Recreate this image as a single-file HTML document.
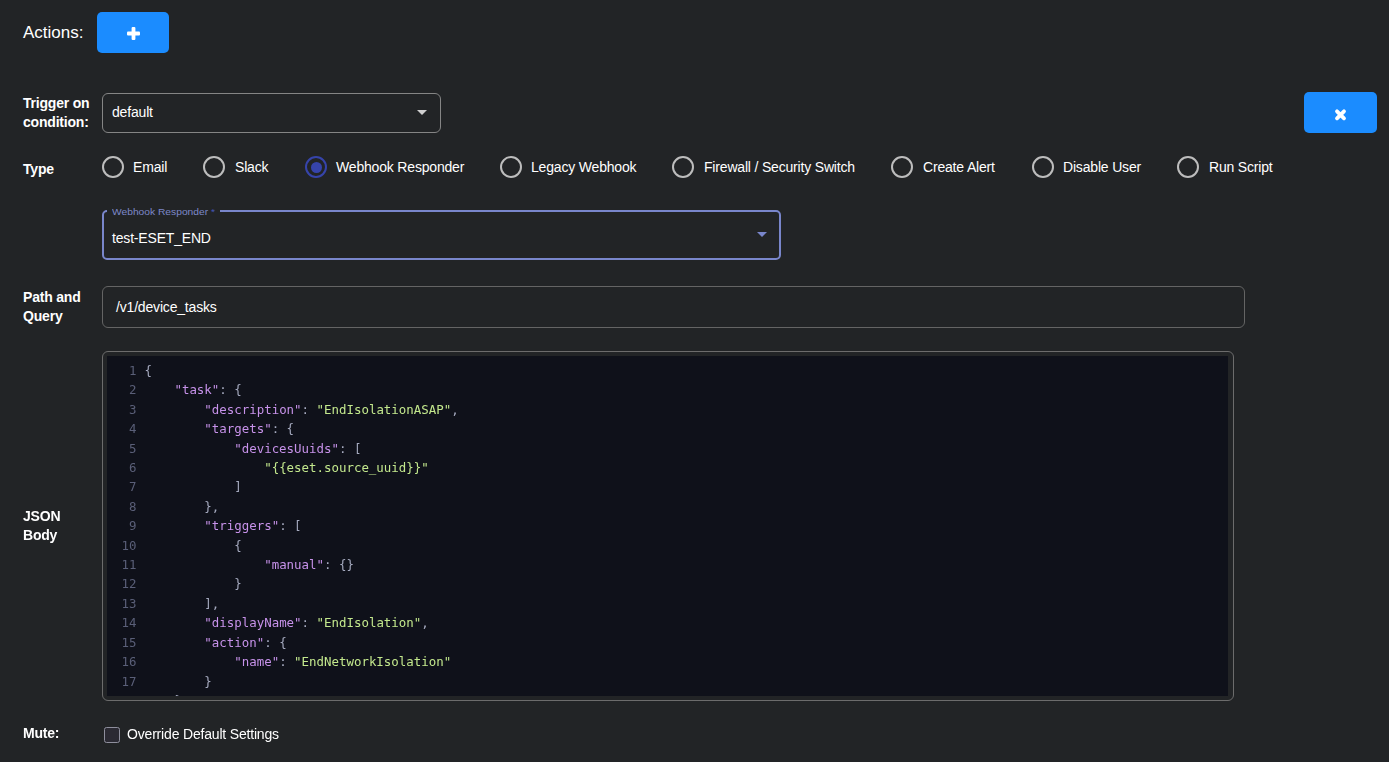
<!DOCTYPE html>
<html lang="en">
<head>
<meta charset="utf-8">
<title>Actions</title>
<style>
*{box-sizing:border-box;margin:0;padding:0}
html,body{width:1389px;height:762px;overflow:hidden;background:#222426;color:#fff;font-family:"Liberation Sans",Arial,sans-serif;font-size:14px}
.abs{position:absolute}
.lbl{position:absolute;left:23px;font-weight:bold;font-size:14px;letter-spacing:-0.2px;line-height:19px;color:#fff}
.btn{position:absolute;background:#1b8cff;border-radius:5px}
.btn svg{position:absolute}
.radio{position:absolute;top:156px;width:22px;height:22px;border:2px solid #bdbdbd;border-radius:50%}
.radio.on{border-color:#3644aa}
.radio.on::after{content:"";position:absolute;left:4px;top:4px;width:11px;height:11px;border-radius:50%;background:#3644aa}
.rl{position:absolute;top:158px;font-size:14px;letter-spacing:-0.18px;line-height:18px;color:#fff;white-space:nowrap}
.code{position:absolute;left:107px;top:356px;width:1121px;height:340px;background:#0f111a;overflow:hidden;font-family:"DejaVu Sans Mono","Liberation Mono",monospace;font-size:12.43px;line-height:19.42px;padding-top:5px}
.ln{display:block;white-space:pre;height:19.42px;color:#a6abc0;position:relative;padding-left:37.5px}
.ln i{position:absolute;left:0;width:29.5px;text-align:right;font-style:normal;color:#5a5f78}
.k{color:#c792ea}.s{color:#c3e88d}
</style>
</head>
<body>
<div class="abs" style="left:23px;top:22px;font-size:17px;line-height:22px;color:#fff">Actions:</div>
<div class="btn" style="left:97px;top:12px;width:72px;height:41px">
<svg style="left:29px;top:14px" width="15" height="15" viewBox="0 0 15 15"><rect x="5.600" y="1" width="3.800" height="13" rx="1" fill="#fff"/><rect x="1" y="5.600" width="13" height="3.800" rx="1" fill="#fff"/></svg>
</div>

<div class="lbl" style="top:94px">Trigger on<br>condition:</div>
<div class="abs" style="left:102px;top:93px;width:339px;height:40px;border:1px solid #858585;border-radius:6px"></div>
<div class="abs" style="left:112px;top:103px;font-size:14px;letter-spacing:-0.18px;line-height:18px">default</div>
<svg class="abs" style="left:417px;top:110px" width="10" height="5" viewBox="0 0 10 5"><path d="M0 0h10L5 5z" fill="#d0d0d0"/></svg>

<div class="btn" style="left:1304px;top:92px;width:73px;height:41px">
<svg style="left:29px;top:15px" width="15" height="15" viewBox="0 0 15 15"><path d="M4 4.300l7 7M11 4.300l-7 7" stroke="#fff" stroke-width="3.800" stroke-linecap="round" fill="none"/></svg>
</div>

<div class="lbl" style="top:160px">Type</div>
<div class="radio" style="left:102px"></div><div class="rl" style="left:133px">Email</div>
<div class="radio" style="left:203px"></div><div class="rl" style="left:235px">Slack</div>
<div class="radio on" style="left:305px"></div><div class="rl" style="left:336px">Webhook Responder</div>
<div class="radio" style="left:500px"></div><div class="rl" style="left:531px">Legacy Webhook</div>
<div class="radio" style="left:672px"></div><div class="rl" style="left:704px">Firewall / Security Switch</div>
<div class="radio" style="left:891px"></div><div class="rl" style="left:923px">Create Alert</div>
<div class="radio" style="left:1032px"></div><div class="rl" style="left:1063px">Disable User</div>
<div class="radio" style="left:1177px"></div><div class="rl" style="left:1209px">Run Script</div>

<div class="abs" style="left:102px;top:210px;width:679px;height:50px;border:2px solid #7986cb;border-radius:5px"></div>
<div class="abs" style="left:107px;top:205px;width:113px;height:12px;background:#222426"></div>
<div class="abs" style="left:112px;top:206px;font-size:9.1px;line-height:12px;color:#7d88c9;white-space:nowrap;transform-origin:0 0;transform:scaleX(1.127)">Webhook Responder <span style="color:#4456b8">*</span></div>
<div class="abs" style="left:112px;top:229px;font-size:14px;letter-spacing:-0.18px;line-height:18px">test-ESET_END</div>
<svg class="abs" style="left:757px;top:232px" width="10" height="5" viewBox="0 0 10 5"><path d="M0 0h10L5 5z" fill="#7986cb"/></svg>

<div class="lbl" style="top:288px">Path and<br>Query</div>
<div class="abs" style="left:102px;top:286px;width:1143px;height:42px;border:1px solid #646464;border-radius:6px"></div>
<div class="abs" style="left:116px;top:298px;font-size:14px;letter-spacing:-0.18px;line-height:18px">/v1/device_tasks</div>

<div class="lbl" style="top:507px;will-change:transform">JSON<br>Body</div>
<div class="abs" style="left:102px;top:351px;width:1132px;height:350px;border:1px solid #6c6c6c;border-radius:6px"></div>
<div class="code"><div style="will-change:transform">
<span class="ln"><i>1</i>{</span>
<span class="ln"><i>2</i>    <span class="k">"task"</span>: {</span>
<span class="ln"><i>3</i>        <span class="k">"description"</span>: <span class="s">"EndIsolationASAP"</span>,</span>
<span class="ln"><i>4</i>        <span class="k">"targets"</span>: {</span>
<span class="ln"><i>5</i>            <span class="k">"devicesUuids"</span>: [</span>
<span class="ln"><i>6</i>                <span class="s">"{{eset.source_uuid}}"</span></span>
<span class="ln"><i>7</i>            ]</span>
<span class="ln"><i>8</i>        },</span>
<span class="ln"><i>9</i>        <span class="k">"triggers"</span>: [</span>
<span class="ln"><i>10</i>            {</span>
<span class="ln"><i>11</i>                <span class="k">"manual"</span>: {}</span>
<span class="ln"><i>12</i>            }</span>
<span class="ln"><i>13</i>        ],</span>
<span class="ln"><i>14</i>        <span class="k">"displayName"</span>: <span class="s">"EndIsolation"</span>,</span>
<span class="ln"><i>15</i>        <span class="k">"action"</span>: {</span>
<span class="ln"><i>16</i>            <span class="k">"name"</span>: <span class="s">"EndNetworkIsolation"</span></span>
<span class="ln"><i>17</i>        }</span>
<span class="ln"><i>18</i>    }</span>
<span class="ln"><i>19</i>}</span>
</div></div>

<div class="lbl" style="top:724px;will-change:transform">Mute:</div>
<div class="abs" style="left:104px;top:727px;width:16px;height:16px;border:1px solid #8f8f9d;border-radius:2.5px;background:#2b2a33"></div>
<div class="abs" style="left:127px;top:725px;will-change:transform;font-size:14px;letter-spacing:-0.18px;line-height:18px">Override Default Settings</div>
</body>
</html>
